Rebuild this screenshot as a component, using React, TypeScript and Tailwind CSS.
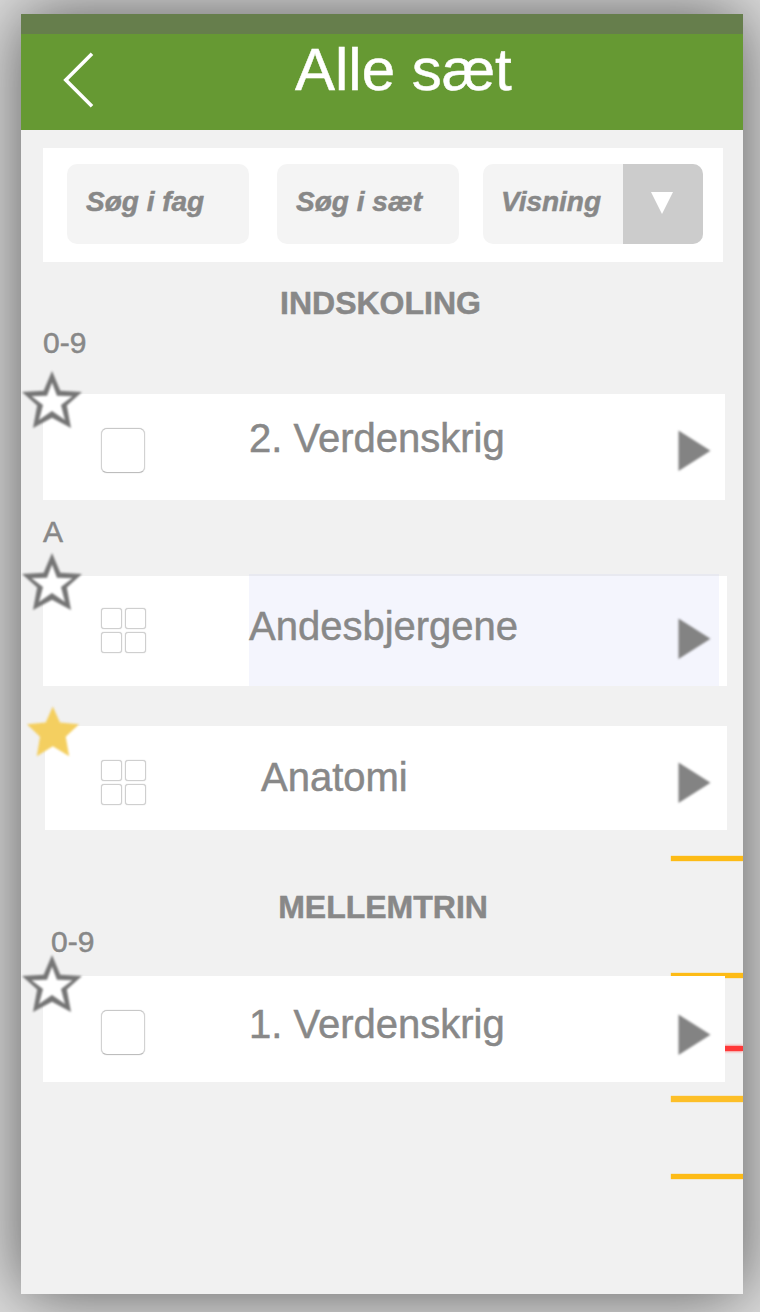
import type { ReactNode } from 'react';

function StarOutline() {
  return (
    <svg viewBox="0 0 60 60" className="h-[60px] w-[60px] blur-[0.9px]">
      <path
        fill="#757575"
        d="M30 1L38.3 20.8L60 22L44.8 35.5L49 58L30 47.8L11 58L15.2 35.5L0 22L21.7 20.8Z"
      />
      <path
        fill="#fff"
        d="M30 12.5L35 25.8L50.5 26.3L39 35L43 50L30 41L17 50L21 35L9.5 26.3L25 25.8Z"
      />
    </svg>
  );
}

function StarFilled() {
  return (
    <svg viewBox="0 0 60 60" className="h-[60px] w-[60px] blur-[0.8px]">
      <path
        fill="#f4cf60"
        d="M30.8 6.5L38 22.5L57 24.3L43.7 36.7L47.2 56.3L30.8 46.3L14.8 56.3L18 36.7L5 24.3L23.7 22.5Z"
      />
    </svg>
  );
}

function SingleCard() {
  return (
    <div className="h-[45px] w-[44px] rounded-[6px] border border-t-[#c8c8c8] border-b-[#bdbdbd] border-x-[#d2d2d2] bg-white shadow-[0_0_1px_#bbb]" />
  );
}

function CardGrid() {
  const cell = 'h-[21px] w-[21px] rounded-[3px] border border-[#cfcfcf] bg-white shadow-[0_0_1px_#bbb]';
  return (
    <div className="grid grid-cols-[21px_21px] gap-x-[3px] gap-y-[3px]">
      <div className={cell} />
      <div className={cell} />
      <div className={cell} />
      <div className={cell} />
    </div>
  );
}

function Arrow() {
  return (
    <svg viewBox="0 0 34 42" className="h-[42px] w-[34px] overflow-visible blur-[0.8px]">
      <path fill="#838383" d="M0.5 0.5L32.5 20.7L0.5 41Z" />
    </svg>
  );
}

type RowProps = {
  title: string;
  className: string;
  iconClass: string;
  titleClass: string;
  arrowClass: string;
  starClass: string;
  icon: ReactNode;
  star: ReactNode;
  highlight?: boolean;
};

function Row(p: RowProps) {
  return (
    <div className={`relative flex items-start bg-white ${p.className}`}>
      <div className={`absolute ${p.starClass}`}>{p.star}</div>
      <div className={`shrink-0 ${p.iconClass}`}>{p.icon}</div>
      <div
        className={
          p.highlight
            ? 'mt-[-2px] flex h-[112px] w-[470px] items-start border-t-2 border-[#e8e9f0] bg-[#f4f5fd]'
            : 'flex w-[470px] items-start'
        }
      >
        <span className={`flex-1 whitespace-nowrap text-[40px] leading-[48px] ${p.titleClass}`}>{p.title}</span>
        <span className={`mr-[7px] ${p.arrowClass}`}>
          <Arrow />
        </span>
      </div>
    </div>
  );
}

function Field({ label }: { label: string }) {
  return (
    <div className="h-20 w-[182px] rounded-[10px] bg-[#f4f4f4] pt-[18px] pl-[19px] text-[28px] leading-10 font-bold whitespace-nowrap italic">
      {label}
    </div>
  );
}

export default function App() {
  return (
    <div className="h-[1312px] w-[760px] overflow-hidden bg-[#dddddd] pt-[14px] pl-[21px] font-['Liberation_Sans',Arial,sans-serif] text-[#888] [-webkit-text-stroke:0.5px_currentColor]">
      <div className="relative isolate flex h-[1280px] w-[722px] flex-col overflow-hidden bg-[#f1f1f1] shadow-[0_0_64px_rgba(0,0,0,0.6)]">
        <div className="h-5 shrink-0 bg-[#667e4c]" />
        <header className="flex h-24 shrink-0 items-start bg-[#669933] text-white">
          <svg viewBox="0 0 32 56" className="mt-[18px] ml-[42px] h-14 w-8" fill="none" stroke="#fff" strokeWidth="3.6">
            <path d="M29 1.8L2.8 28L29 54.2" />
          </svg>
          <h1 className="mt-px ml-[200px] text-[60px] leading-[70px] whitespace-nowrap">Alle sæt</h1>
        </header>

        <div className="mt-[18px] ml-[22px] flex h-[114px] w-[680px] shrink-0 items-start bg-white pt-4 pl-6">
          <Field label="Søg i fag" />
          <div className="ml-7">
            <Field label="Søg i sæt" />
          </div>
          <div className="ml-6 flex h-20 w-[220px] overflow-hidden rounded-[10px] bg-[#f4f4f4]">
            <div className="w-[140px] pt-[18px] pl-[18px] text-[28px] leading-10 font-bold italic">Visning</div>
            <div className="flex w-20 justify-center bg-[#ccc] pt-7">
              <svg viewBox="0 0 22 22" className="mr-[2px] h-[22px] w-[22px]" fill="#fff">
                <path d="M0 0H22L11 22Z" />
              </svg>
            </div>
          </div>
        </div>

        <h2 className="mt-[21px] mr-[3px] text-center text-[32px] leading-10 font-bold">INDSKOLING</h2>
        <div className="ml-[22px] text-[30px] leading-10">0-9</div>
        <Row
          title="2. Verdenskrig"
          className="mt-[31px] ml-[22px] h-[106px] w-[682px]"
          iconClass="mt-[34px] ml-[58px] w-[148px]"
          titleClass="mt-5"
          arrowClass="mt-9"
          starClass="-top-6 -left-[21px]"
          icon={<SingleCard />}
          star={<StarOutline />}
        />
        <div className="mt-3 ml-[22px] text-[30px] leading-10">A</div>
        <Row
          title="Andesbjergene"
          className="mt-6 ml-[22px] h-[110px] w-[684px]"
          iconClass="mt-[32px] ml-[58px] w-[148px]"
          titleClass="mt-[26px]"
          arrowClass="mt-[42px]"
          starClass="-top-6 -left-[21px]"
          icon={<CardGrid />}
          star={<StarOutline />}
          highlight
        />
        <Row
          title="Anatomi"
          className="mt-10 ml-6 h-[104px] w-[682px]"
          iconClass="mt-[34px] ml-[56px] w-[148px]"
          titleClass="mt-[27px] ml-3"
          arrowClass="mt-9"
          starClass="-top-[26px] -left-[23px]"
          icon={<CardGrid />}
          star={<StarFilled />}
        />

        <h2 className="mt-[61px] ml-[2px] text-center text-[32px] leading-8 font-bold">MELLEMTRIN</h2>
        <div className="ml-[30px] text-[30px] leading-[38px]">0-9</div>
        <Row
          title="1. Verdenskrig"
          className="mt-[15px] ml-[22px] h-[106px] w-[682px]"
          iconClass="mt-[34px] ml-[58px] w-[148px]"
          titleClass="mt-6"
          arrowClass="mt-[38px]"
          starClass="-top-[22px] -left-[21px]"
          icon={<SingleCard />}
          star={<StarOutline />}
        />

        {/* Annotation connector ends, running underneath the rows */}
        <div className="absolute top-[842px] right-0 -z-10 h-[5px] w-[72px] bg-[#fdbb16] shadow-[0_0_1px_#fdbb16]" />
        <div className="absolute top-[959px] right-0 -z-10 h-[5px] w-[72px] bg-[#fdbb16] shadow-[0_0_1px_#fdbb16]" />
        <div className="absolute top-[1032px] right-0 -z-10 h-[5px] w-[72px] bg-[#ff3838] shadow-[0_0_3px_#ff3838]" />
        <div className="absolute top-[1082px] right-0 -z-10 h-[6px] w-[72px] bg-[#fdbf28] shadow-[0_0_1px_#fdbf28]" />
        <div className="absolute top-[1160px] right-0 -z-10 h-[5px] w-[72px] bg-[#fdbb16] shadow-[0_0_1px_#fdbb16]" />
      </div>
    </div>
  );
}
